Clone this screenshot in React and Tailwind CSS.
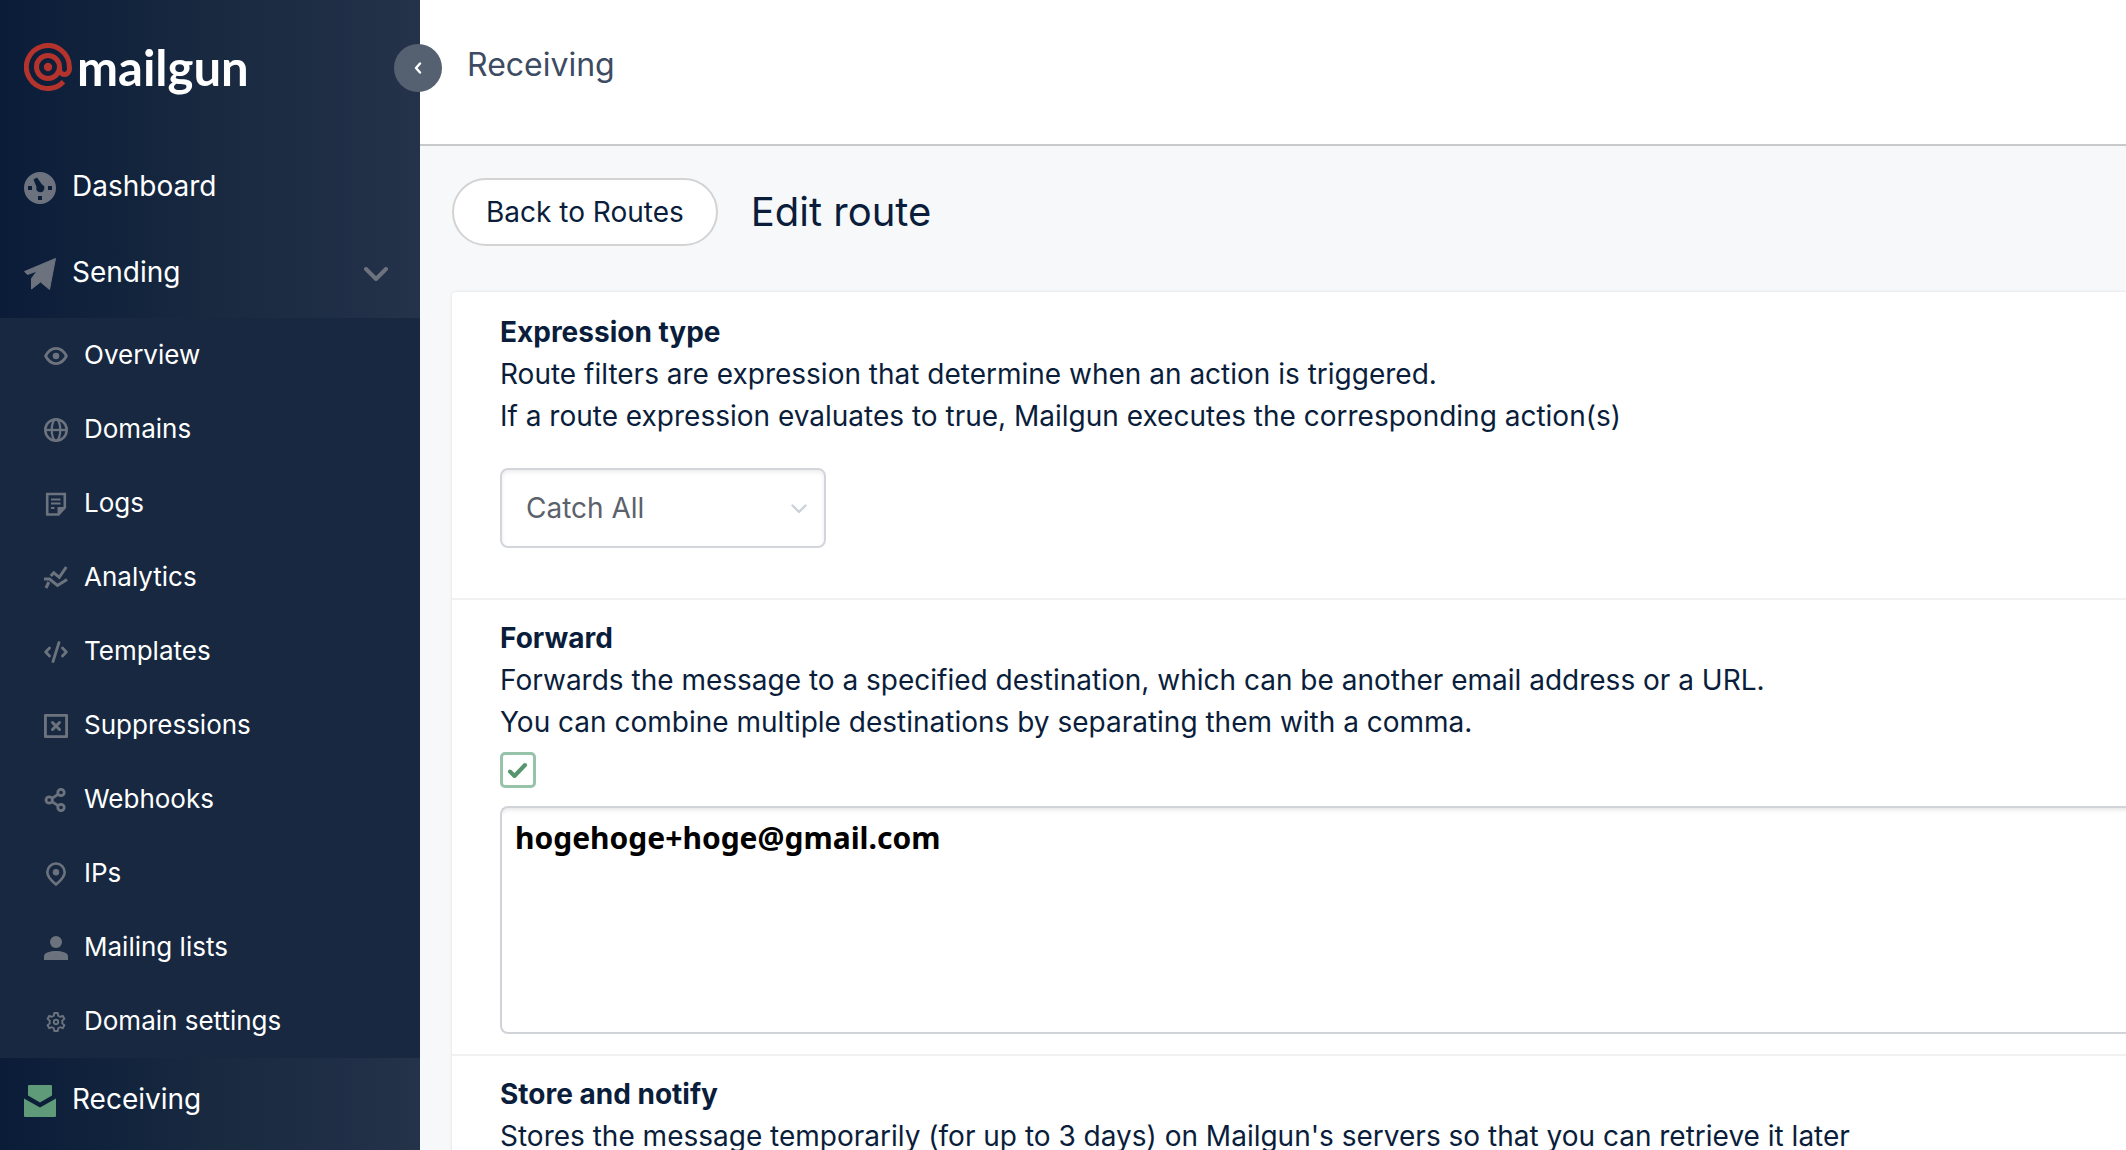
import React from "react";

const FONT = "font-['Inter','Liberation_Sans',sans-serif]";

const icons = {
  overview: (
    <g>
      <path d="M1.6 12C4.2 7 7.5 4.400 12 4.400s7.800 2.600 10.400 7.600c-2.600 5-5.900 7.600-10.400 7.600S4.200 17 1.600 12z" fill="none" stroke="currentColor" strokeWidth="2.800" strokeLinejoin="round" />
      <circle cx="12" cy="12" r="3.300" />
    </g>
  ),
  domains: (
    <g fill="none" stroke="currentColor" strokeWidth="2.300">
      <circle cx="12" cy="12" r="10.700" strokeWidth="2.600" />
      <ellipse cx="12" cy="12" rx="4.300" ry="10.700" />
      <path d="M1 12h22" />
    </g>
  ),
  logs: (
    <g>
      <path d="M3.200 2h17.600v13.500l-6.300 7H3.200z" fill="none" stroke="currentColor" strokeWidth="2.600" />
      <path d="M13.500 23v-8h8z" />
      <path d="M7 7.500h9.500M7 11.500h9.500M7 16h3.500" fill="none" stroke="currentColor" strokeWidth="2.200" />
    </g>
  ),
  analytics: (
    <g fill="none" stroke="currentColor" strokeWidth="3">
      <path d="M0 13h5.500l8 6.500 9.500-6" />
      <path d="M2 22l2.800-6" />
      <path d="M6.800 10l3-3.200 5.500 4.500 7-10.300" />
    </g>
  ),
  templates: (
    <g fill="none" stroke="currentColor" strokeWidth="2.800" strokeLinecap="round" strokeLinejoin="round">
      <path d="M5.500 8L1.700 12l3.800 4M18.500 8l3.800 4-3.800 4M15 2.500L9 21.500" />
    </g>
  ),
  suppressions: (
    <g fill="none" stroke="currentColor">
      <rect x="1.400" y="1.400" width="21.200" height="21.200" strokeWidth="2.900" strokeLinejoin="round" />
      <path d="M8.500 8.500l7 7M15.500 8.500l-7 7" strokeWidth="3" strokeLinecap="round" />
    </g>
  ),
  webhooks: (
    <g fill="none" stroke="currentColor" strokeWidth="2.800">
      <circle cx="17" cy="4.500" r="3.200" />
      <circle cx="17" cy="19.500" r="3.200" />
      <circle cx="5.200" cy="12" r="3.200" />
      <path d="M8 10.300l6-4M8 13.700l6 4" />
    </g>
  ),
  ips: (
    <g>
      <path d="M12 22.500C8 19 3.300 15.500 3.300 10.200a8.700 8.700 0 0 1 17.400 0C20.700 15.500 16 19 12 22.500z" fill="none" stroke="currentColor" strokeWidth="2.600" />
      <circle cx="12" cy="10.300" r="3.200" />
    </g>
  ),
  lists: (
    <g>
      <circle cx="12" cy="6" r="6" />
      <path d="M0 24v-4.500C1 16.500 6 15 12 15s11 1.500 12 4.500V24z" />
    </g>
  ),
  settings: (
    <g fill="none" stroke="currentColor" strokeWidth="1.900" strokeLinejoin="round">
      <path d="M10.300 3h3.400l.5 2.700 1.900 1.100 2.600-1 1.700 3-2.100 1.800v2.800l2.100 1.800-1.700 3-2.600-1-1.900 1.100-.5 2.700h-3.400l-.5-2.700-1.900-1.100-2.600 1-1.700-3 2.100-1.800v-2.800L3.600 8.800l1.700-3 2.600 1 1.900-1.100z" />
      <circle cx="12" cy="12" r="2.200" />
    </g>
  ),
};

const subItems = [
  ["overview", "Overview"],
  ["domains", "Domains"],
  ["logs", "Logs"],
  ["analytics", "Analytics"],
  ["templates", "Templates"],
  ["suppressions", "Suppressions"],
  ["webhooks", "Webhooks"],
  ["ips", "IPs"],
  ["lists", "Mailing lists"],
  ["settings", "Domain settings"],
];

function Logo() {
  return (
    <a href="#home" aria-label="mailgun" className="flex h-[68px] items-center">
      <svg viewBox="0 0 48 48" className="h-12 w-12 shrink-0 text-[#b4342d]" fill="none" stroke="currentColor" strokeWidth="5">
        <circle cx="24" cy="24" r="4.200" fill="currentColor" stroke="none" />
        <circle cx="24" cy="24" r="11.500" />
        <path d="M35.500 24v2.500a4.900 4.900 0 0 0 9.900 0V24A21.500 21.500 0 1 0 39.500 38.800" />
      </svg>
      <span className="ml-[5px] font-['Lato',sans-serif] text-[49px] leading-[64px] font-bold text-white">mailgun</span>
    </a>
  );
}

function Sidebar() {
  return (
    <aside className="w-[420px] shrink-0 bg-linear-to-r from-[#0a1c38] via-[#182940] via-50% to-[#24324a] text-white">
      <div className="h-[142px] px-6 pt-[33px]">
        <Logo />
      </div>
      <nav>
        <a href="#dashboard" className="flex h-[88px] items-center px-6 text-[28px]">
          <svg viewBox="0 0 32 32" className="mt-1 mr-4 h-8 w-8 text-[#6c737e]" fill="currentColor">
            <path fillRule="evenodd" d="M16 0a16 16 0 1 1 0 32 16 16 0 0 1 0-32zM4 14v4h4v-4zM24 14v4h4v-4zM14 24v4h4v-4zM9.500 7.500l3 7.500a4 4 0 1 0 5.500-2.500L13 5.500z" />
          </svg>
          Dashboard
        </a>
        <a href="#sending" className="flex h-[88px] items-center px-6 pb-1 text-[28px]">
          <svg viewBox="0 0 32 32" className="mt-1 mr-4 h-8 w-8 text-[#6c737e]" fill="currentColor" stroke="currentColor" strokeWidth="1" strokeLinejoin="round">
            <path d="M31.500 .5l-6 31-9-7.500L7.500 31V20.500l5.500-7.500-9.500 3.500L.5 13.500z" />
          </svg>
          <span className="grow">Sending</span>
          <svg viewBox="0 0 24 14" className="mt-1 mr-2 h-[14px] w-6 text-[#6c737e]" fill="none" stroke="currentColor" strokeWidth="4" strokeLinecap="round" strokeLinejoin="round">
            <path d="M2 2l10 10L22 2" />
          </svg>
        </a>
        <div className="bg-[#172840]">
          {subItems.map(([key, label]) => (
            <a key={key} href={"#" + key} className="flex h-[74px] items-center pb-[2px] pl-11 text-[26px]">
              <svg viewBox="0 0 24 24" className="mt-1 mr-4 h-6 w-6 text-[#6c737e]" fill="currentColor">
                {icons[key]}
              </svg>
              {label}
            </a>
          ))}
        </div>
        <a href="#receiving" className="flex h-[92px] items-center px-6 pb-[10px] text-[28px]">
          <svg viewBox="0 0 32 32" className="mt-1 mr-4 h-8 w-8 text-[#5f9b78]" fill="currentColor">
            <path d="M5 0h22a1 1 0 0 1 1 1v9.500L16 17.500 4 10.500V1a1 1 0 0 1 1-1z" />
            <path d="M0 13.500l16 9 16-9V31a1 1 0 0 1-1 1H1a1 1 0 0 1-1-1z" />
          </svg>
          Receiving
        </a>
      </nav>
    </aside>
  );
}

function Section({ title, lines, children, className = "" }) {
  return (
    <section className={"border-b-2 border-[#f1f1f2] pl-12 text-[28px] leading-[42px] " + className}>
      <h2 className="font-bold">{title}</h2>
      {lines.map((l) => (
        <p key={l}>{l}</p>
      ))}
      {children}
    </section>
  );
}

export default function App() {
  return (
    <div className={"flex h-screen overflow-hidden text-[#0a1e3b] " + FONT}>
      <Sidebar />
      <main className="min-w-0 grow bg-[#f7f8fa]">
        <header className="relative flex h-[146px] items-start border-b-2 border-[#c8c9cb] bg-white pt-11 pl-[47px]">
          <button type="button" aria-label="Collapse menu" className="absolute top-11 -left-[26px] flex h-12 w-12 items-center justify-center rounded-full bg-[#556070]">
            <svg viewBox="0 0 8 12" className="h-3 w-2" fill="none" stroke="white" strokeWidth="2.400" strokeLinecap="round" strokeLinejoin="round">
              <path d="M6 1.500L2 6l4 4.500" />
            </svg>
          </button>
          <p className="text-[32px] leading-[42px] text-[#3d4b63]">Receiving</p>
        </header>
        <div className="pl-8">
          <div className="flex h-[146px] items-start pt-8">
            <button type="button" className="h-[68px] rounded-full border-2 border-[#d3d3d3] bg-white px-8 text-[28px]">
              Back to Routes
            </button>
            <h1 className="ml-[33px] text-[40px] leading-[68px]">Edit route</h1>
          </div>
          <div className="overflow-hidden rounded-tl bg-white shadow-[0_0_3px_rgba(0,0,0,0.12)]">
            <Section title="Expression type" className="h-[308px] pt-[19px]" lines={["Route filters are expression that determine when an action is triggered.", "If a route expression evaluates to true, Mailgun executes the corresponding action(s)"]}>
              <div className="relative mt-[31px] w-[326px]">
                <select aria-label="Expression type" className="h-20 w-full appearance-none rounded-lg border-2 border-[#d2d5da] bg-white pl-6 text-[28px] text-[#5b626b] shadow-[inset_0_2px_4px_rgba(0,0,0,0.08)]">
                  <option>Catch All</option>
                </select>
                <svg viewBox="0 0 16 10" className="pointer-events-none absolute top-9 right-[19px] h-[10px] w-4 text-[#cdd1d8]" fill="none" stroke="currentColor" strokeWidth="2.400" strokeLinecap="round" strokeLinejoin="round">
                  <path d="M1.500 1.500L8 8l6.500-6.500" />
                </svg>
              </div>
            </Section>
            <Section title="Forward" className="h-[456px] pt-[17px]" lines={["Forwards the message to a specified destination, which can be another email address or a URL.", "You can combine multiple destinations by separating them with a comma."]}>
              <div className="relative mt-[9px] h-9 w-9">
                <input type="checkbox" defaultChecked aria-label="Forward" className="block h-9 w-9 appearance-none rounded-[5px] border-3 border-[#98c3ab] bg-white" />
                <svg viewBox="0 0 36 36" className="pointer-events-none absolute inset-0 h-9 w-9 text-[#57956f]" fill="none" stroke="currentColor" strokeWidth="4" strokeLinecap="round" strokeLinejoin="round">
                  <path d="M10 19.500l4.500 4.500L25 13" />
                </svg>
              </div>
              <textarea aria-label="Forward destinations" defaultValue="hogehoge+hoge@gmail.com" className="mt-[18px] block h-[228px] w-full resize-none rounded-l-lg border-2 border-r-0 border-[#d0d4d9] bg-white px-[13px] py-[9px] font-['Noto_Sans',sans-serif] text-[30px] leading-[42px] font-bold text-black shadow-[inset_0_5px_4px_-3px_rgba(0,0,0,0.1)]" />
            </Section>
            <Section title="Store and notify" className="h-[308px] pt-[17px]" lines={["Stores the message temporarily (for up to 3 days) on Mailgun's servers so that you can retrieve it later"]} />
          </div>
        </div>
      </main>
    </div>
  );
}
